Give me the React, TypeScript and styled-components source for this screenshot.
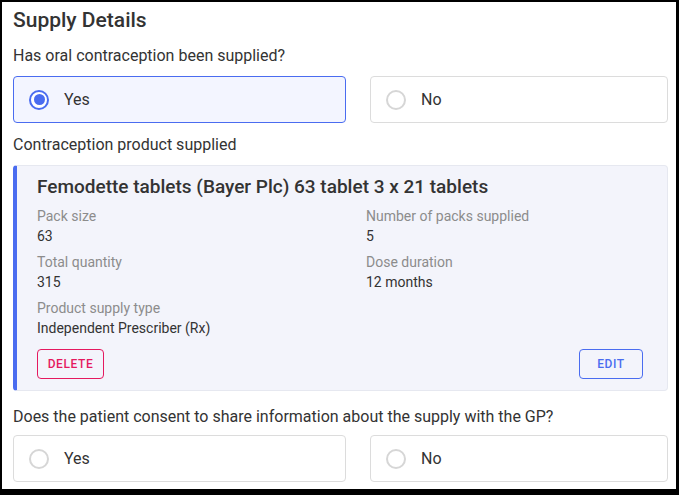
import React from "react";
import styled, { createGlobalStyle } from "styled-components";

const Global = createGlobalStyle`
  html, body { margin: 0; padding: 0; background: #000; }
  body { font-family: Roboto, "Liberation Sans", sans-serif; }
  * { box-sizing: border-box; }
`;

const Frame = styled.div`
  margin: 2px 3px 0 2px;
  width: 674px;
  height: 487px;
  background: #fff;
  padding: 6px 8px 0 11px;
  overflow: hidden;
  color: #333;
`;

const Title = styled.h1`
  margin: 0;
  font-size: 21px;
  line-height: 25px;
  font-weight: 500;
  color: #333;
`;

const Question = styled.div<{ $mt: number }>`
  margin-top: ${(p) => p.$mt}px;
  font-size: 16px;
  line-height: 20px;
  color: #333;
`;

const OptionGrid = styled.div<{ $mt: number }>`
  margin-top: ${(p) => p.$mt}px;
  display: grid;
  grid-template-columns: 333px 298px;
  column-gap: 24px;
`;

const Option = styled.div<{ $selected?: boolean }>`
  height: 47px;
  display: flex;
  align-items: center;
  gap: 15px;
  padding-left: 15px;
  border: 1px solid ${(p) => (p.$selected ? "#4a6cf0" : "#dcdcdc")};
  border-radius: 4px;
  background: ${(p) => (p.$selected ? "#f3f5ff" : "#fff")};
  font-size: 16px;
  color: #333;
`;

const Radio = styled.span<{ $checked?: boolean }>`
  width: 20px;
  height: 20px;
  border-radius: 50%;
  border: 2px solid ${(p) => (p.$checked ? "#4a6cf0" : "#d6d6d6")};
  background: #fff;
  display: flex;
  align-items: center;
  justify-content: center;
  flex: none;
  &::after {
    content: "";
    display: ${(p) => (p.$checked ? "block" : "none")};
    width: 11px;
    height: 11px;
    border-radius: 50%;
    background: #4a6cf0;
  }
`;

const Card = styled.div`
  margin-top: 10px;
  background: #f3f4fb;
  border: 1px solid #e6e8f0;
  border-left: 4px solid #4a6cf0;
  border-radius: 4px;
  padding: 9px 24px 11px 20px;
`;

const CardTitle = styled.div`
  font-size: 19px;
  line-height: 24px;
  font-weight: 500;
  color: #333;
`;

const FieldGrid = styled.div`
  margin-top: 7px;
  display: grid;
  grid-template-columns: 329px 1fr;
  row-gap: 5px;
`;

const Field = styled.div`
  display: flex;
  flex-direction: column;
`;

const Label = styled.div`
  font-size: 14px;
  line-height: 20px;
  color: #8c8c8c;
`;

const Value = styled.div`
  font-size: 14px;
  line-height: 21px;
  color: #333;
`;

const Actions = styled.div`
  margin-top: 10px;
  display: flex;
  justify-content: space-between;
`;

const ActionButton = styled.button<{ $color: string; $w: number }>`
  width: ${(p) => p.$w}px;
  height: 30px;
  border: 1px solid ${(p) => p.$color};
  border-radius: 4px;
  background: transparent;
  color: ${(p) => p.$color};
  font-family: Roboto, "Liberation Sans", sans-serif;
  font-size: 12px;
  font-weight: 500;
  letter-spacing: 0.6px;
  padding: 0;
  cursor: pointer;
`;

type Opt = { label: string; selected?: boolean };

const Options = ({ items, mt }: { items: Opt[]; mt: number }) => (
  <OptionGrid $mt={mt}>
    {items.map((o) => (
      <Option key={o.label} $selected={o.selected}>
        <Radio $checked={o.selected} />
        {o.label}
      </Option>
    ))}
  </OptionGrid>
);

const fields = [
  ["Pack size", "63"],
  ["Number of packs supplied", "5"],
  ["Total quantity", "315"],
  ["Dose duration", "12 months"],
  ["Product supply type", "Independent Prescriber (Rx)"],
];

export default function App() {
  return (
    <>
      <Global />
      <Frame>
        <Title>Supply Details</Title>
        <Question $mt={13}>Has oral contraception been supplied?</Question>
        <Options mt={10} items={[{ label: "Yes", selected: true }, { label: "No" }]} />
        <Question $mt={12}>Contraception product supplied</Question>
        <Card>
          <CardTitle>Femodette tablets (Bayer Plc) 63 tablet 3 x 21 tablets</CardTitle>
          <FieldGrid>
            {fields.map(([l, v]) => (
              <Field key={l}>
                <Label>{l}</Label>
                <Value>{v}</Value>
              </Field>
            ))}
          </FieldGrid>
          <Actions>
            <ActionButton $color="#e5195f" $w={67}>DELETE</ActionButton>
            <ActionButton $color="#4a6cf0" $w={64}>EDIT</ActionButton>
          </Actions>
        </Card>
        <Question $mt={16}>Does the patient consent to share information about the supply with the GP?</Question>
        <Options mt={8} items={[{ label: "Yes" }, { label: "No" }]} />
      </Frame>
    </>
  );
}
